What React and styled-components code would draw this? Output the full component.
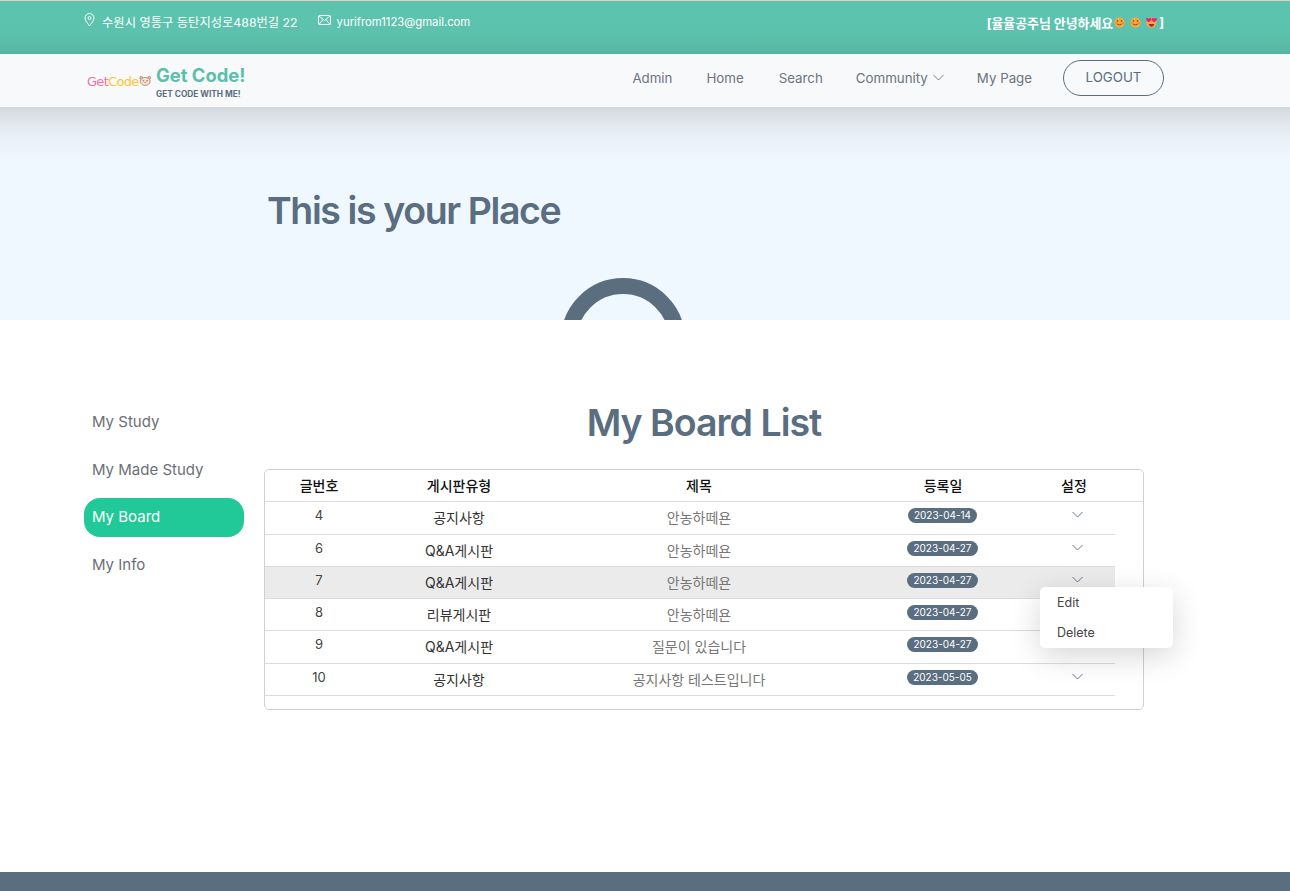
import React from 'react';
import styled, { createGlobalStyle } from 'styled-components';

const GlobalStyle = createGlobalStyle`
  html, body { margin: 0; padding: 0; background: #fff; }
  body { font-family: Inter, "Noto Sans CJK KR", sans-serif; color: #5a6e7f; }
  * { box-sizing: border-box; }
`;

const Page = styled.div`
  height: 891px;
  display: flex;
  flex-direction: column;
  overflow: hidden;
`;

const TopBar = styled.div`
  height: 54px;
  flex: none;
  padding: 13px 126px 0 84px;
  display: flex;
  justify-content: space-between;
  align-items: flex-start;
  color: #fff;
  font-size: 12.3px;
  border-top: 1px solid #e8cfc4;
  background: linear-gradient(180deg, #5cc4ae 0%, #5cc2ad 60%, #56b5a1 100%);
`;

const Contact = styled.div`
  display: flex;
  align-items: center;
  margin-right: ${p => p.$gap || 0}px;
  gap: ${p => p.$inner}px;
  height: 16px;
  font-size: ${p => p.$size}px;
`;

const ContactGroup = styled.div`
  display: flex;
`;

const Greeting = styled.div`
  display: flex;
  align-items: center;
  height: 16px;
  font-weight: 700;
  font-size: 12.9px;
  white-space: pre;
`;

const Emojis = styled.div`
  display: flex;
  gap: 5px;
  margin: 0 2px 0 1px;
`;

const NavBar = styled.header`
  height: 53px;
  flex: none;
  padding: 0 126px 6px 84px;
  display: flex;
  align-items: center;
  justify-content: space-between;
  background: #f8f9fb;
`;

const Brand = styled.div`
  display: flex;
  align-items: center;
  gap: 5px;
  margin-top: 5px;
`;

const LogoMark = styled.div`
  display: flex;
  align-items: center;
  width: 67px;
  padding-left: 3px;
  font-size: 13px;
  font-family: "DejaVu Sans", sans-serif;
  margin-top: 2px;
  letter-spacing: -0.7px;
`;

const LogoWord = styled.span`
  color: ${p => p.$color};
`;

const BrandText = styled.div`
  display: flex;
  flex-direction: column;
  margin-top: 4px;
`;

const BrandName = styled.div`
  color: #5bc0a9;
  font-size: 18.4px;
  font-weight: 700;
  line-height: 20px;
  white-space: nowrap;
`;

const BrandSub = styled.div`
  color: #5a6e7f;
  font-size: 8.3px;
  font-weight: 700;
  line-height: 10px;
  margin-top: 4px;
  white-space: nowrap;
`;

const Menu = styled.nav`
  display: flex;
  align-items: center;
`;

const MenuLink = styled.a`
  display: flex;
  align-items: center;
  gap: 5px;
  color: #6b7480;
  font-size: 13.3px;
  margin-right: ${p => p.$gap}px;
  white-space: nowrap;
`;

const LogoutButton = styled.button`
  width: 101px;
  height: 36px;
  border: 1px solid #5a6e7f;
  border-radius: 18px;
  background: transparent;
  color: #5a6e7f;
  font-family: inherit;
  font-size: 13.3px;
  padding-bottom: 3px;
`;

const Hero = styled.section`
  height: 213px;
  flex: none;
  overflow: hidden;
  background: linear-gradient(180deg, #d3d8dd 0, #e0e6ec 15px, #e9f0f7 30px, #eff7ff 52px);
  padding: 80px 0 0 267px;
`;

const HeroTitle = styled.h1`
  margin: 0;
  height: 48px;
  font-size: 37.5px;
  line-height: 48px;
  font-weight: 600;
  letter-spacing: -1.4px;
  color: #5a6e7f;
`;

const Ring = styled.div`
  width: 124px;
  height: 124px;
  margin: 43px 0 0 294px;
  border: 16px solid #5a6e7f;
  border-radius: 50%;
`;

const Main = styled.main`
  flex: 1;
  display: flex;
  align-items: flex-start;
  padding: 77px 0 0 84px;
`;

const Side = styled.aside`
  width: 160px;
  flex: none;
  margin-right: 20px;
  padding-top: 6px;
  display: flex;
  flex-direction: column;
`;

const SideItem = styled.div`
  height: 39px;
  margin-bottom: 8.5px;
  padding: 0 0 2px 8px;
  display: flex;
  align-items: center;
  border-radius: 16px;
  font-size: 15px;
  color: ${p => (p.$active ? '#fff' : '#6b6f78')};
  background: ${p => (p.$active ? '#20c997' : 'transparent')};
`;

const Content = styled.div`
  width: 880px;
  display: flex;
  flex-direction: column;
`;

const ContentTitle = styled.h2`
  margin: 0;
  height: 72px;
  font-size: 37.5px;
  line-height: 52px;
  font-weight: 600;
  letter-spacing: -1px;
  text-align: center;
  color: #5a6e7f;
`;

const Card = styled.div`
  height: 241px;
  border: 1px solid #cfd0d2;
  border-radius: 5px;
  position: relative;
`;

const Row = styled.div`
  display: grid;
  grid-template-columns: 102px 184px 296px 192px 76px;
  width: ${p => (p.$head ? '100%' : '850px')};
  height: ${p => p.$height}px;
  align-items: start;
  text-align: center;
  border-bottom: 1px solid #dcdcde;
  background: ${p => (p.$hover ? '#ebebeb' : 'transparent')};
`;

const HeadCell = styled.div`
  font-size: 14px;
  font-weight: 500;
  line-height: 18px;
  padding: 7px ${p => p.$padRight || 0}px 0 ${p => p.$pad || 0}px;
  color: #111;
`;

const NumCell = styled.div`
  font-size: 13px;
  line-height: 16px;
  padding: 5px 0 0 6px;
  color: #444;
`;

const TypeCell = styled.div`
  font-size: 14px;
  line-height: 18px;
  padding-top: 7px;
  color: #333;
`;

const TitleCell = styled.div`
  font-size: 14px;
  line-height: 18px;
  padding-top: 7px;
  color: #777;
`;

const DateCell = styled.div`
  padding: 6px 1px 0 0;
  height: 100%;
  line-height: 0;
`;

const DateBadge = styled.span`
  display: inline-block;
  height: 15px;
  padding: 0 6px;
  border-radius: 8px;
  background: #5a6e7f;
  color: #fff;
  font-size: 10px;
  line-height: 15px;
  white-space: nowrap;
`;

const ArrowCell = styled.div`
  padding-top: 0;
  color: #5a6e7f;
`;

const Dropdown = styled.div`
  position: absolute;
  left: 775px;
  top: 117px;
  width: 133px;
  height: 61px;
  padding: 0 0 0 17px;
  display: flex;
  flex-direction: column;
  justify-content: center;
  gap: 12px;
  background: #fff;
  border-radius: 5px;
  box-shadow: 0 8px 30px rgba(0, 0, 0, 0.16);
  font-size: 12.5px;
  color: #444;
`;

const DropItem = styled.div`
  line-height: 18px;
`;

const Footer = styled.footer`
  height: 19px;
  flex: none;
  background: #5a6e7f;
`;

const PinIcon = () => (
  <svg width="11" height="14" viewBox="0 0 11 14" fill="none" stroke="#fff" strokeWidth="1" style={{ marginTop: -4 }}>
    <path d="M5.5 13C3.5 10 1 7.5 1 5a4.5 4.5 0 0 1 9 0c0 2.500-2.500 5-4.500 8z" />
    <circle cx="5.500" cy="5" r="1.500" />
  </svg>
);

const MailIcon = () => (
  <svg width="13" height="11" viewBox="0 0 13 11" fill="none" stroke="#fff" strokeWidth="1" style={{ marginTop: -4 }}>
    <rect x="0.500" y="0.500" width="12" height="9" rx="1" />
    <path d="M1 1l5.500 4.500L12 1M1 9.500l4-5M12 9.500l-4-5" />
  </svg>
);

const Chevron = ({ width = 11 }) => (
  <svg width={width} height="7" viewBox="0 0 11 7" fill="none" stroke="currentColor" strokeWidth="0.9">
    <path d="M0.500 1l5 5 5-5" />
  </svg>
);

const Smile = ({ hearts }) => (
  <svg width="11" height="11" viewBox="0 0 11 11">
    <circle cx="5.500" cy="5.500" r="5.200" fill="#f5a83c" />
    {hearts ? (
      <>
        <path d="M0.800 3.500c0-2 2.300-2.300 3-.8.700-1.500 3-1.200 3 .8 0 1.500-2 2.500-3 3.200-1-.7-3-1.700-3-3.200z" fill="#e8207c" transform="translate(-0.500 -0.500) scale(0.85)" />
        <path d="M0.800 3.500c0-2 2.300-2.300 3-.8.700-1.500 3-1.200 3 .8 0 1.500-2 2.500-3 3.200-1-.7-3-1.700-3-3.200z" fill="#e8207c" transform="translate(5 -0.500) scale(0.85)" />
        <path d="M2.800 7h5.400c-.4 2-1.500 2.700-2.700 2.700S3.200 9 2.800 7z" fill="#a3223c" />
      </>
    ) : (
      <>
        <circle cx="3.500" cy="4" r="0.800" fill="#7a3b14" />
        <circle cx="7.500" cy="4" r="0.800" fill="#7a3b14" />
        <path d="M2.800 6.500c.6 1.700 4.800 1.700 5.400 0" fill="none" stroke="#7a3b14" strokeWidth="0.800" />
        <circle cx="2" cy="6" r="1" fill="#ee7a4f" opacity="0.700" />
        <circle cx="9" cy="6" r="1" fill="#ee7a4f" opacity="0.700" />
      </>
    )}
  </svg>
);

const Bear = () => (
  <svg width="14" height="12" viewBox="0 0 14 12" fill="none" stroke="#b5805f" strokeWidth="0.900">
    <circle cx="2.500" cy="2.500" r="1.600" fill="#e8c9b0" />
    <circle cx="11.500" cy="2.500" r="1.600" fill="#e8c9b0" />
    <ellipse cx="7" cy="6.500" rx="5.500" ry="4.500" fill="#f3e3d3" />
    <circle cx="5" cy="5.800" r="0.500" fill="#6b4630" />
    <circle cx="9" cy="5.800" r="0.500" fill="#6b4630" />
    <path d="M6 7.800h2" />
  </svg>
);

const posts = [
  { id: 4, type: '공지사항', title: '안농하떼욘', date: '2023-04-14', h: 33 },
  { id: 6, type: 'Q&A게시판', title: '안농하떼욘', date: '2023-04-27', h: 32 },
  { id: 7, type: 'Q&A게시판', title: '안농하떼욘', date: '2023-04-27', h: 32, hover: true },
  { id: 8, type: '리뷰게시판', title: '안농하떼욘', date: '2023-04-27', h: 32 },
  { id: 9, type: 'Q&A게시판', title: '질문이 있습니다', date: '2023-04-27', h: 33 },
  { id: 10, type: '공지사항', title: '공지사항 테스트입니다', date: '2023-05-05', h: 32 },
];

const sideMenu = ['My Study', 'My Made Study', 'My Board', 'My Info'];

export default function App() {
  return (
    <Page>
      <GlobalStyle />
      <TopBar>
        <ContactGroup>
          <Contact $gap={20} $inner={7}><PinIcon />수원시 영통구 동탄지성로488번길 22</Contact>
          <Contact $inner={6} $size={11.3}><MailIcon />yurifrom1123@gmail.com</Contact>
        </ContactGroup>
        <Greeting>
          [율율공주님 안녕하세요
          <Emojis><Smile /><Smile /><Smile hearts /></Emojis>
          ]
        </Greeting>
      </TopBar>
      <NavBar>
        <Brand>
          <LogoMark>
            <LogoWord $color="#f56fa8">Get</LogoWord>
            <LogoWord $color="#fbc531">Code</LogoWord>
            <Bear />
          </LogoMark>
          <BrandText>
            <BrandName>Get Code!</BrandName>
            <BrandSub>GET CODE WITH ME!</BrandSub>
          </BrandText>
        </Brand>
        <Menu>
          <MenuLink $gap={34}>Admin</MenuLink>
          <MenuLink $gap={35}>Home</MenuLink>
          <MenuLink $gap={33}>Search</MenuLink>
          <MenuLink $gap={33}>Community <Chevron /></MenuLink>
          <MenuLink $gap={31}>My Page</MenuLink>
          <LogoutButton>LOGOUT</LogoutButton>
        </Menu>
      </NavBar>
      <Hero>
        <HeroTitle>This is your Place</HeroTitle>
        <Ring />
      </Hero>
      <Main>
        <Side>
          {sideMenu.map(item => (
            <SideItem key={item} $active={item === 'My Board'}>{item}</SideItem>
          ))}
        </Side>
        <Content>
          <ContentTitle>My Board List</ContentTitle>
          <Card>
            <Row $head $height={32}>
              <HeadCell $pad={6}>글번호</HeadCell>
              <HeadCell>게시판유형</HeadCell>
              <HeadCell>제목</HeadCell>
              <HeadCell>등록일</HeadCell>
              <HeadCell $padRight={6}>설정</HeadCell>
            </Row>
            {posts.map(post => (
              <Row key={post.id} $height={post.h} $hover={post.hover}>
                <NumCell>{post.id}</NumCell>
                <TypeCell>{post.type}</TypeCell>
                <TitleCell>{post.title}</TitleCell>
                <DateCell><DateBadge>{post.date}</DateBadge></DateCell>
                <ArrowCell><Chevron /></ArrowCell>
              </Row>
            ))}
            <Dropdown>
              <DropItem>Edit</DropItem>
              <DropItem>Delete</DropItem>
            </Dropdown>
          </Card>
        </Content>
      </Main>
      <Footer />
    </Page>
  );
}
